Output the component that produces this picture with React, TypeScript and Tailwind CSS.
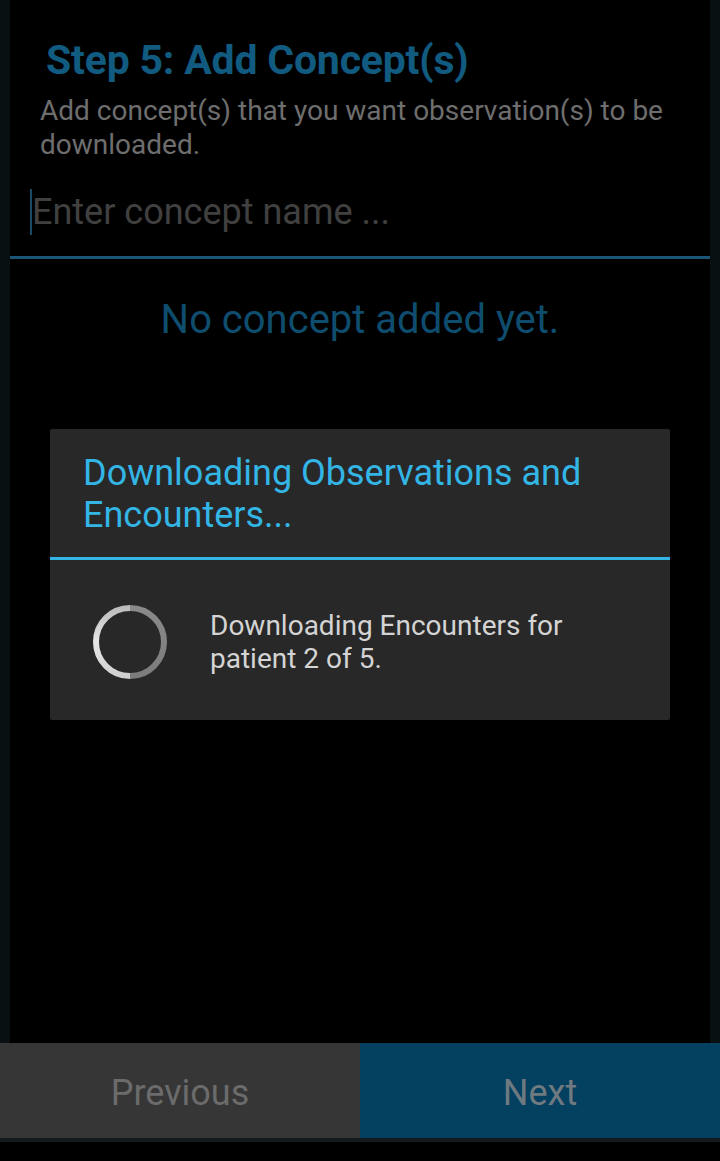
import React from "react";

export default function App() {
  return (
    <div
      className="relative w-[720px] h-[1161px] bg-black flex flex-col overflow-hidden"
      style={{ fontFamily: "Roboto, 'Noto Sans', sans-serif" }}
    >
      <div className="flex-1 flex bg-[#081012] px-[10px]">
        <div className="flex-1 bg-black flex flex-col">
          <h1 className="mt-[37px] ml-[36px] text-[41px] leading-[46px] font-bold text-[#115a80] tracking-[-0.2px] whitespace-nowrap">
            Step 5: Add Concept(s)
          </h1>
          <p className="mt-[11px] ml-[30px] mr-[10px] text-[28px] leading-[34px] text-[#6e6e6e]">
            Add concept(s) that you want observation(s) to be downloaded.
          </p>
          <div className="mt-[6px] flex items-center h-[91px] border-b-[3px] border-[#1a5675]">
            <div className="ml-[20px] w-[2px] h-[46px] bg-[#1a4a66]" />
            <span className="ml-[0px] text-[36px] leading-[46px] text-[#404040]">
              Enter concept name ...
            </span>
          </div>
          <p className="mt-[38px] text-center text-[40px] leading-[46px] text-[#0f4d6e]">
            No concept added yet.
          </p>
        </div>
      </div>
      <div className="flex h-[95px]">
        <div className="flex-1 bg-[#363636] flex items-center justify-center pt-[4px] text-[36px] text-[#6b6b6b]">
          Previous
        </div>
        <div className="flex-1 bg-[#04405f] flex items-center justify-center pt-[4px] text-[36px] text-[#6e7a80]">
          Next
        </div>
      </div>
      <div className="h-[4px] bg-[#121a1c]" />
      <div className="h-[19px] bg-black" />

      <div className="absolute left-[50px] top-[429px] w-[620px] h-[291px] bg-[#282828] rounded-[2px] flex flex-col shadow-[0_0_3px_rgba(0,0,0,0.8)]">
        <div className="h-[128px] px-[33px] pt-[23px] text-[36px] leading-[42px] text-[#33b5e5]">
          Downloading Observations and Encounters...
        </div>
        <div className="h-[3px] bg-[#33b5e5]" />
        <div className="flex-1 flex items-center pt-[4px]">
          <svg className="ml-[42px]" width="76" height="76" viewBox="0 0 76 76">
            <defs>
              <linearGradient id="lg" x1="0" y1="0" x2="0" y2="1">
                <stop offset="0" stopColor="#bdbdbd" />
                <stop offset="0.5" stopColor="#e6e6e6" />
                <stop offset="1" stopColor="#d0d0d0" />
              </linearGradient>
              <linearGradient id="rg" x1="0" y1="0" x2="0" y2="1">
                <stop offset="0" stopColor="#8a8a8a" />
                <stop offset="1" stopColor="#7c7c7c" />
              </linearGradient>
            </defs>
            <path d="M38 4 A34 34 0 0 0 38 72" fill="none" stroke="url(#lg)" strokeWidth="6" />
            <path d="M38 4 A34 34 0 0 1 38 72" fill="none" stroke="url(#rg)" strokeWidth="6" />
          </svg>
          <p className="ml-[42px] w-[380px] text-[28px] leading-[33px] text-[#d4d4d4]">
            Downloading Encounters for patient 2 of 5.
          </p>
        </div>
      </div>
    </div>
  );
}
